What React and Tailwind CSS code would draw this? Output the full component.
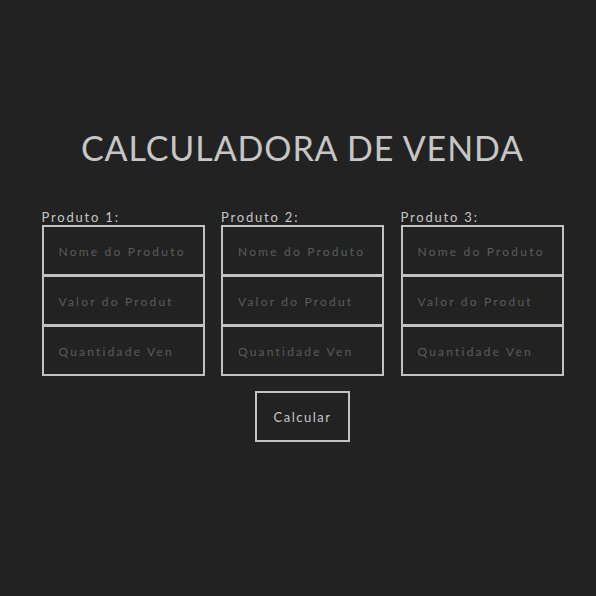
const produtos = [1, 2, 3]

const campos = ['Nome do Produto', 'Valor do Produt', 'Quantidade Ven']

export default function App() {
  return (
    <div className="min-h-screen bg-[#222222] pl-[9px] font-['Lato',_'Noto_Sans',_sans-serif]">
      <div className="flex flex-col items-center pt-[131px]">
        <h1 className="text-[34px] leading-none tracking-[0.9px] text-[#c6c6c6]">CALCULADORA DE VENDA</h1>

        <div className="mt-[44px] flex gap-[16.5px]">
          {produtos.map(n => (
            <div key={n} className="flex w-[163px] flex-col">
              <label className="text-[13px] leading-[16px] tracking-[1.8px] text-[#c6c6c6]">Produto {n}:</label>
              {campos.map((c, i) => (
                <input
                  key={c}
                  placeholder={c}
                  className={`h-[51px] w-full border-2 border-[#c2c2c2] bg-transparent px-[15px] pt-[1px] text-[12px] tracking-[2.2px] text-[#c6c6c6] outline-none placeholder:text-[#5c5c5c] ${i > 0 ? '-mt-px' : ''}`}
                />
              ))}
            </div>
          ))}
        </div>

        <button className="mt-[15px] h-[51px] w-[95px] border-2 border-[#c2c2c2] pt-[2px] text-[13px] tracking-[1.5px] text-[#c6c6c6]">
          Calcular
        </button>
      </div>
    </div>
  )
}
